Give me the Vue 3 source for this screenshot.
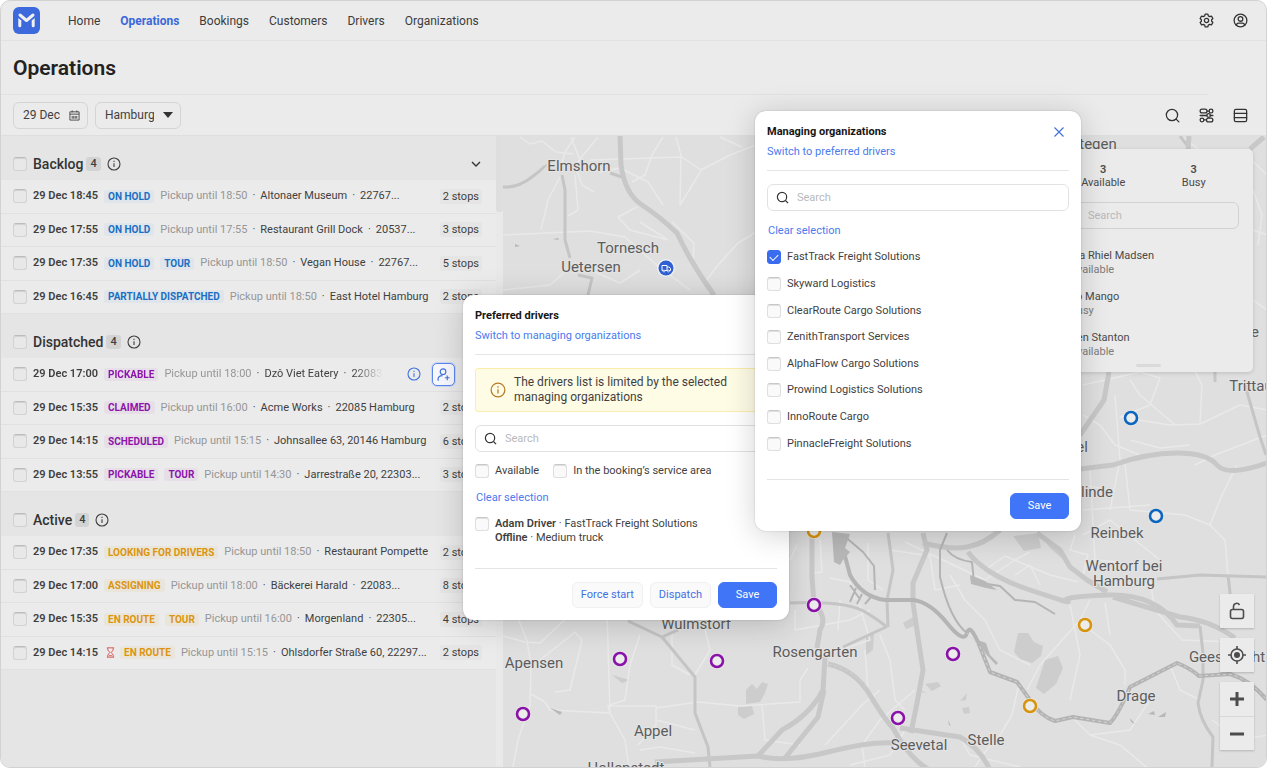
<script setup>
import { ref } from 'vue'

const nav = ['Home', 'Operations', 'Bookings', 'Customers', 'Drivers', 'Organizations']
const city = ref('Hamburg')
const managed = ref(['FastTrack Freight Solutions'])

const groups = [
  {
    name: 'Backlog', tone: 'hold', chevron: true,
    rows: [
      { time: '29 Dec 18:45', tags: ['ON HOLD'], until: '18:50', place: 'Altonaer Museum', zip: '22767...', stops: 2 },
      { time: '29 Dec 17:55', tags: ['ON HOLD'], until: '17:55', place: 'Restaurant Grill Dock', zip: '20537...', stops: 3 },
      { time: '29 Dec 17:35', tags: ['ON HOLD', 'TOUR'], until: '18:50', place: 'Vegan House', zip: '22767...', stops: 5 },
      { time: '29 Dec 16:45', tags: ['PARTIALLY DISPATCHED'], until: '18:50', place: 'East Hotel Hamburg', zip: ' ', stops: 2 },
    ],
  },
  {
    name: 'Dispatched', tone: 'sent',
    rows: [
      { time: '29 Dec 17:00', tags: ['PICKABLE'], until: '18:00', place: 'Dzô Viet Eatery', zip: '22083', actions: true },
      { time: '29 Dec 15:35', tags: ['CLAIMED'], until: '16:00', place: 'Acme Works', zip: '22085 Hamburg', stops: 2 },
      { time: '29 Dec 14:15', tags: ['SCHEDULED'], until: '15:15', place: 'Johnsallee 63, 20146 Hamburg', stops: 6 },
      { time: '29 Dec 13:55', tags: ['PICKABLE', 'TOUR'], until: '14:30', place: 'Jarrestraße 20, 22303...', stops: 3 },
    ],
  },
  {
    name: 'Active', tone: 'live',
    rows: [
      { time: '29 Dec 17:35', tags: ['LOOKING FOR DRIVERS'], until: '18:50', place: 'Restaurant Pompette', stops: 2 },
      { time: '29 Dec 17:00', tags: ['ASSIGNING'], until: '18:00', place: 'Bäckerei Harald', zip: '22083...', stops: 8 },
      { time: '29 Dec 15:35', tags: ['EN ROUTE', 'TOUR'], until: '16:00', place: 'Morgenland', zip: '22305...', stops: 4 },
      { time: '29 Dec 14:15', late: true, tags: ['EN ROUTE'], until: '15:15', place: 'Ohlsdorfer Straße 60, 22297...', stops: 2 },
    ],
  },
]

const organizations = [
  'FastTrack Freight Solutions', 'Skyward Logistics', 'ClearRoute Cargo Solutions', 'ZenithTransport Services',
  'AlphaFlow Cargo Solutions', 'Prowind Logistics Solutions', 'InnoRoute Cargo', 'PinnacleFreight Solutions',
]

const drivers = [
  { name: 'Ida Rhiel Madsen', state: 'Available' },
  { name: 'Jo Mango', state: 'Busy' },
  { name: 'Ben Stanton', state: 'Available' },
]

const places = [
  ['Elmshorn', 579, 171], ['Tornesch', 628, 253], ['Uetersen', 591, 272], ['Apensen', 534, 668],
  ['Appel', 653, 736], ['Wulmstorf', 696, 629], ['Rosengarten', 815, 657], ['Seevetal', 919, 750],
  ['Stelle', 986, 745], ['Drage', 1136, 701], ['Reinbek', 1117, 538], ['Wentorf bei', 1124, 571],
  ['Hamburg', 1124, 586], ['Geesthacht', 1227, 662], ['Trittau', 1251, 391], ['Hollenstedt', 626, 773],
  ['linde', 1097, 497], ['el', 1082, 452], ['tegen', 1098, 149], ['e', 1255, 337],
]

const pins = [
  ['#8a12a8', 620, 659], ['#8a12a8', 717, 661], ['#8a12a8', 523, 714], ['#8a12a8', 814, 605],
  ['#8a12a8', 953, 654], ['#8a12a8', 898, 718], ['#d8930f', 814, 531], ['#d8930f', 1085, 625],
  ['#d8930f', 1030, 706], ['#0d66bd', 1131, 418], ['#0d66bd', 1156, 516],
]

const lanes = [
  'M520 137L530 144L542 141L556 152L573 154M575 137L565 152L560 170M598 137L575 165L582 185L594 192M571 137L580 160L600 172L620 168L648 182L663 205M590 160L650 158L682 157L701 170L730 155L766 141',
  'M663 137L652 155L645 175L632 182M676 137L681 155L680 205L701 171M720 137L742 147M560 177L548 200L541 230M575 175L578 210L568 216M503 235L590 231L625 237L660 268L690 290M618 217L637 207M618 217L630 230L668 240M668 240L640 222M766 226L738 243L718 265L705 282M672 222L694 243L693 262M503 290L550 285L575 263L620 283L640 270',
  'M503 636L525 642L540 643L575 610M513 606L527 641L531 665L530 705L518 740L513 767M540 660L575 632L582 640L570 690L555 692M531 694L545 702L550 710L610 713L608 706L656 706L656 720L695 730M610 713L607 612M610 713L625 740L629 767M656 706L656 725L638 745M607 706L625 700L630 665L640 635M700 610L710 650L695 675M770 704L740 706L698 702L656 708M770 704L800 702L800 680L808 668',
  'M640 750L660 747L695 753M762 705L765 740L800 745M672 632L672 665L690 675M790 560L797 545M795 610L795 630L850 620L870 610M880 635L890 660L895 700L905 710M865 650L868 690L875 697M830 578L850 582L855 600M868 543L868 580L883 590M890 550L930 556L935 590L960 585M950 575L965 600L985 620L1000 650L1030 665',
  'M1083 385L1140 372L1160 378L1150 405L1120 417L1170 425L1200 424L1240 405L1267 410M1115 395L1120 460L1110 510M1200 424L1202 385L1195 371M1175 425L1140 395L1130 380M1267 435L1215 455L1195 465M1083 415L1100 425L1115 445L1140 455M1090 470L1095 560L1120 562M1125 464L1130 510L1185 515L1210 525L1225 540L1228 575M1210 525L1222 495L1237 465M1083 510L1150 505M1083 535L1110 520L1160 560',
  'M1027 690L1040 665L1080 620L1090 600M1090 630L1110 645L1125 670L1125 685M1105 603L1110 635M1070 605L1080 655L1070 700M1150 580L1155 610L1182 640L1235 642M1150 700L1130 730L1090 735L1070 715M1090 735L1120 745L1150 770M1170 665L1180 690L1200 700M1212 720L1240 740L1267 735M960 737L970 755L1020 767M1018 688L1012 715L1000 735L985 752L975 767M905 730L890 755L850 765M915 690L880 720L862 745L865 767',
  'M905 542L985 580L1015 560L1030 552M985 570L1005 556L1050 575L1078 582M1015 575L1030 565L1040 585M1075 535L1070 550L1088 555L1083 575M1083 485L1110 490M1130 440L1160 448L1190 445M820 540L822 572L812 573M840 600L838 630M855 590L870 640L840 650M880 690L862 705L825 745',
  'M1180 136L1200 150L1195 149M1240 149L1267 175M1253 230L1267 235M1253 300L1267 310M1253 190L1262 215L1258 245',
]
</script>

<template>
  <div class="app">
    <header class="topbar">
      <svg class="logo" viewBox="0 0 27 27" aria-label="Logo">
        <rect width="27" height="27" rx="6" fill="#3c69dc" />
        <path d="M7 8L13.500 13.500L20 8" fill="none" stroke="#f0f0f2" stroke-width="3" stroke-linecap="round" stroke-linejoin="round" />
        <path d="M5.300 11L8.300 13.400V18.700a1.500 1.500 0 0 1-3 0zM21.700 11L18.700 13.400V18.700a1.500 1.500 0 0 0 3 0z" fill="#f0f0f2" />
      </svg>
      <nav class="nav">
        <a v-for="item in nav" :key="item" href="#" :class="{ current: item === 'Operations' }">{{ item }}</a>
      </nav>
      <div class="tools">
        <button class="tool" aria-label="Settings">
          <svg viewBox="0 0 16 16"><path d="M6.700 2h2.600l.4 1.700 1.300.7 1.700-.5 1.300 2.200-1.200 1.200v1.400l1.200 1.200-1.300 2.200-1.700-.5-1.300.7-.4 1.700H6.700l-.4-1.700-1.300-.7-1.700.5L2 9.900l1.200-1.200V7.300L2 6.100l1.300-2.200 1.700.5 1.300-.7z" /><circle cx="8" cy="8" r="2" /></svg>
        </button>
        <button class="tool" aria-label="Account">
          <svg viewBox="0 0 16 16"><circle cx="8" cy="8" r="6" /><circle cx="8" cy="6.500" r="2.200" /><path d="M4 12.300c.4-1.300 1.200-1.900 2.200-1.900h3.600c1 0 1.800.6 2.200 1.900" /></svg>
        </button>
      </div>
    </header>

    <div class="heading"><h1>Operations</h1></div>

    <div class="filters">
      <button class="field">
        29 Dec
        <svg class="cal" viewBox="0 0 12 12"><path d="M1 2h10v9H1zM1 4.500h10M3.500.5v2M8.500.5v2M3.500 6.500v3M5.200 6.500v3M6.800 6.500v3M8.500 6.500v3" /></svg>
      </button>
      <label class="pick">
        <select v-model="city" aria-label="City"><option>Hamburg</option></select>
        <svg viewBox="0 0 10 6"><path d="M0 0h10L5 6z" fill="#333" /></svg>
      </label>
      <div class="tools">
        <button class="tool" aria-label="Search">
          <svg viewBox="0 0 16 16"><circle cx="7.500" cy="7.500" r="5.300" /><path d="M11.400 11.400L14 14" /></svg>
        </button>
        <button class="tool" aria-label="Filters">
          <svg viewBox="0 0 16 16"><rect x="2" y="2" width="6.500" height="3.600" rx="1.800" /><rect x="10.500" y="2" width="3.500" height="3.600" rx="1.700" /><path d="M8.500 3.800h2M2 8h2.500M11.500 8H14M5.500 12.200h2.500" /><circle cx="10" cy="8" r="1.700" /><path d="M4.500 8h3.800" /><rect x="2" y="10.400" width="3.500" height="3.600" rx="1.700" /><rect x="8" y="10.400" width="6" height="3.600" rx="1.800" /></svg>
        </button>
        <button class="tool" aria-label="List view">
          <svg viewBox="0 0 16 16"><rect x="2.200" y="2.200" width="11.600" height="11.600" rx="1.500" /><path d="M2.200 6h11.600M2.200 10h11.600" /></svg>
        </button>
      </div>
    </div>

    <main class="content">
      <section class="bookings">
        <section v-for="g in groups" :key="g.name" :class="g.tone">
          <header class="group-head">
            <input type="checkbox" :aria-label="'Select all ' + g.name">
            <h2>{{ g.name }}</h2>
            <span class="count">4</span>
            <svg class="info" viewBox="0 0 14 14"><circle cx="7" cy="7" r="6" /><path d="M7 6.300v3.700M7 3.800v1.200" /></svg>
            <svg v-if="g.chevron" class="chevron" viewBox="0 0 10 6"><path d="M1 1l4 4 4-4" /></svg>
          </header>
          <ul class="rows">
            <li v-for="r in g.rows" :key="r.time">
              <input type="checkbox" :aria-label="'Select booking ' + r.time">
              <div class="line" :class="{ fade: r.actions }">
                <b>{{ r.time }}</b>
                <svg v-if="r.late" class="late" viewBox="0 0 10 12"><path d="M1 .8h8M1 11.200h8M2 1v2.200L4.200 6 2 8.800V11M8 1v2.200L5.800 6 8 8.800V11M3.500 9.500h3" /></svg>
                <span v-for="t in r.tags" :key="t" class="tag">{{ t }}</span>
                <span class="until">Pickup until {{ r.until }}</span>
                <span class="place"><i>·</i>{{ r.place }}<template v-if="r.zip"><i>·</i>{{ r.zip }}</template></span>
              </div>
              <template v-if="r.actions">
                <button class="plain" aria-label="Details"><svg class="info" viewBox="0 0 14 14"><circle cx="7" cy="7" r="6" /><path d="M7 6.300v3.700M7 3.800v1.200" /></svg></button>
                <button class="assign" aria-label="Assign driver"><svg viewBox="0 0 16 16"><circle cx="7.500" cy="5" r="3" /><path d="M2 14c0-3.500 2-4.800 5-4.800M12 9v5M9.500 11.500h5M2 14h1" /></svg></button>
              </template>
              <span v-else class="stops">{{ r.stops }} stops</span>
            </li>
          </ul>
        </section>
      </section>
      <div class="gutter"><div class="thumb"></div></div>

      <section class="map">
        <svg class="canvas" viewBox="503 136 763 631" preserveAspectRatio="xMinYMin slice">
          <g fill="#cdcdcd">
            <path d="M746 690L752 684L757 689L762 682L768 684L765 693L760 702L746 704zM738 707L752 706L754 714L744 719L738 715z" />
            <path d="M1018 633L1028 633L1034 642L1043 646L1041 656L1032 663L1020 659L1014 652zM1045 660L1058 656L1063 668L1056 684L1044 694L1036 688z" />
            <path d="M925 684L938 682L941 686L932 691zM960 701L967 693L966 700zM962 708L969 707L970 713L964 714zM1013 536L1038 533L1041 548L1024 551z" />
            <path d="M866 636L874 634L873 650L866 655zM903 623L913 617L914 626L906 629zM1040 534L1060 550L1064 560L1050 548zM612 675L630 680L622 683z" />
          </g>
          <path v-for="(d, i) in lanes" :key="i" :d="d" fill="none" stroke="#e9e9e9" stroke-width="1.5" stroke-linejoin="round" />
          <g fill="none" stroke="#c5c5c5" stroke-width="3" stroke-linejoin="round">
            <path d="M503 187Q518 188 532 177T545 165M562 175L565 190L565 240L570 258M578 275L592 278L588 295M610 173L622 177" />
            <path d="M1245 385L1260 437L1266 455M1157 579L1200 575L1267 577M1228 575L1232 610M790 603Q847 600 867 613T886 627L843 647M628 621L662 637L695 677L695 713L708 747L710 767M662 637L678 630" />
            <path d="M1200 626L1203 653L1203 680L1198 703Q1200 720 1213 737L1212 767M1180 136L1190 149M888 533L893 570L887 600L888 627M1215 371L1215 382" />
          </g>
          <g fill="none" stroke="#c8c8c8" stroke-width="5" stroke-linejoin="round">
            <path d="M620 135L621 165Q625 194 642 205T677 233Q692 265 714 295" />
            <path d="M1109 372L1104 400L1080 435M1080 469L1113 465Q1147 453 1177 453T1217 465T1267 463" />
            <path d="M968 552Q985 575 1030 590T1067 601T1107 595T1177 625L1200 626M1113 597L1180 617Q1210 620 1235 638" />
            <path d="M1037 533L1060 550L1070 567L1087 580L1107 592M923 533L927 550L913 583L913 603L918 637L923 670L917 703L911 733M923 543Q950 550 967 547T1000 530" />
            <path d="M812 535L812 577L814 603Q828 618 820 630L817 648M825 657L823 690Q810 715 782 730L758 756M824 690L818 717L785 758M828 664Q855 670 870 695T893 728Q910 760 930 770" />
            <path d="M655 762L758 756Q785 763 828 752T896 743M900 728L960 737Q980 748 990 770M1189 136L1188 150M1250 149L1264 137" />
          </g>
          <g fill="none" stroke="#b4b4b4" stroke-linejoin="round">
            <path stroke-width="2" d="M947 533L940 550L940 577Q950 620 967 633M947 550Q955 560 972 562L974 582L1000 586L1015 600L1035 602L1055 614M850 585L859 598M856 588L850 602M862 594L857 604M871 597L865 604M843 535L863 552L874 566L875 590" />
            <path stroke-width="4" d="M842 545L850 575Q862 597 885 600L913 600Q930 602 947 623T967 633T980 647L990 672L1017 682L1030 700Q1040 716 1055 721L1073 717L1110 723Q1118 715 1130 687L1177 663Q1190 668 1199 676L1230 674Q1250 680 1267 700" />
            <path stroke="#d4d4d4" stroke-width="1" stroke-dasharray="3 3" d="M967 633T980 647L990 672L1017 682L1030 700Q1040 716 1055 721L1073 717L1110 723Q1118 715 1130 687L1177 663Q1190 668 1199 676L1230 674Q1250 680 1267 700M828 664Q855 670 868 690" />
          </g>
          <g fill="#b8b8b8">
            <path d="M832 532L850 534L845 548L850 552L843 560L840 565L834 562zM970 575L985 581L997 590L986 588L971 584zM978 640L986 643L990 655L998 663L996 665L985 653z" />
            <path d="M1148 714L1154 711L1155 715zM1158 717L1166 712L1165 717zM1130 718L1135 724L1131 722zM550 708L562 712L560 715zM515 244L520 246L515 247zM553 239L559 238L558 240zM921 691L927 693L922 692zM948 720L951 726L949 725z" />
          </g>
          <g class="labels" text-anchor="middle">
            <text v-for="p in places" :key="p[0]" :x="p[1]" :y="p[2]">{{ p[0] }}</text>
          </g>
          <g v-for="(p, i) in pins" :key="i">
            <circle :cx="p[1]" :cy="p[2]" r="8" fill="#e8e8e8" />
            <circle :cx="p[1]" :cy="p[2]" r="6" fill="#ececec" :stroke="p[0]" stroke-width="2.600" />
          </g>
          <circle cx="666" cy="268" r="9" fill="#eef0f5" />
          <circle cx="666" cy="268" r="7.500" fill="#2f5fd0" />
          <path d="M662 265.500h5v5h-5zM667 267h2.200l1.300 1.600v1.900H667" fill="none" stroke="#fff" />
          <circle cx="664" cy="271" r="1" fill="#2f5fd0" stroke="#fff" stroke-width=".7" />
          <circle cx="668.500" cy="271" r="1" fill="#2f5fd0" stroke="#fff" stroke-width=".7" />
        </svg>

        <aside class="drivers">
          <dl class="stats">
            <div><dd>3</dd><dt>Available</dt></div>
            <div><dd>3</dd><dt>Busy</dt></div>
          </dl>
          <label class="search">
            <svg viewBox="0 0 14 14"><circle cx="6.500" cy="6.500" r="5" /><path d="M10.200 10.200L13 13" /></svg>
            <input type="text" placeholder="Search" aria-label="Search drivers">
          </label>
          <ul>
            <li v-for="d in drivers" :key="d.name">{{ d.name }}<small>{{ d.state }}</small></li>
          </ul>
          <div class="grip"></div>
        </aside>

        <div class="controls">
          <button aria-label="Unlock map"><svg viewBox="0 0 20 20"><rect x="3.500" y="8.500" width="13" height="9" rx="2" /><path d="M6.500 8.500V5.500a3.200 3.200 0 0 1 6-1.500" /></svg></button>
          <button aria-label="Centre map"><svg viewBox="0 0 20 20"><circle cx="10" cy="10" r="6" /><circle cx="10" cy="10" r="3" fill="#4c4c4c" stroke="none" /><path d="M10 1v3M10 16v3M1 10h3M16 10h3" /></svg></button>
          <div class="zoom">
            <button aria-label="Zoom in"><svg viewBox="0 0 20 20"><path class="thick" d="M10 3v14M3 10h14" /></svg></button>
            <button aria-label="Zoom out"><svg viewBox="0 0 20 20"><path class="thick" d="M3 10h14" /></svg></button>
          </div>
        </div>
      </section>
    </main>

    <section class="dialog preferred" role="dialog" aria-label="Preferred drivers">
      <header>
        <div>
          <h3>Preferred drivers</h3>
          <a href="#">Switch to managing organizations</a>
        </div>
      </header>
      <p class="notice">
        <svg class="info" viewBox="0 0 14 14"><circle cx="7" cy="7" r="6" /><path d="M7 6.300v3.700M7 3.800v1.200" /></svg>
        <span>The drivers list is limited by the selected<br>managing organizations</span>
      </p>
      <label class="search">
        <svg viewBox="0 0 14 14"><circle cx="6.500" cy="6.500" r="5" /><path d="M10.200 10.200L13 13" /></svg>
        <input type="text" placeholder="Search" aria-label="Search preferred drivers">
      </label>
      <div class="toggles">
        <label class="check"><input type="checkbox">Available</label>
        <label class="check"><input type="checkbox">In the booking’s service area</label>
      </div>
      <a class="clear" href="#">Clear selection</a>
      <label class="check driver">
        <input type="checkbox">
        <span><b>Adam Driver</b> · FastTrack Freight Solutions<br><b>Offline</b> · Medium truck</span>
      </label>
      <footer>
        <button class="ghost">Force start</button>
        <button class="ghost">Dispatch</button>
        <button class="save">Save</button>
      </footer>
    </section>

    <section class="dialog managing" role="dialog" aria-label="Managing organizations">
      <header>
        <div>
          <h3>Managing organizations</h3>
          <a href="#">Switch to preferred drivers</a>
        </div>
        <button class="close" aria-label="Close"><svg viewBox="0 0 10 10"><path d="M.5.5l9 9M9.500.5l-9 9" /></svg></button>
      </header>
      <label class="search">
        <svg viewBox="0 0 14 14"><circle cx="6.500" cy="6.500" r="5" /><path d="M10.200 10.200L13 13" /></svg>
        <input type="text" placeholder="Search" aria-label="Search organizations">
      </label>
      <a class="clear" href="#">Clear selection</a>
      <div class="options">
        <label v-for="o in organizations" :key="o" class="check">
          <input v-model="managed" type="checkbox" :value="o">{{ o }}
        </label>
      </div>
      <footer><button class="save">Save</button></footer>
    </section>
  </div>
</template>

<style>
body { background: #fff; }
</style>

<style scoped>
* { box-sizing: border-box; }
.app {
  position: relative;
  display: flex;
  flex-direction: column;
  height: 100vh;
  min-height: 640px;
  overflow: hidden;
  border: 1px solid #d2d2d2;
  border-radius: 10px;
  background: #ebebeb;
  color: #3f3f3f;
  font: 11px/14px Roboto, "Liberation Sans", sans-serif;
}
h1, h2, h3, p, ul, dl, dd { margin: 0; padding: 0; }
ul { list-style: none; }
svg { display: block; flex: none; }
button, input, select { font: inherit; color: inherit; }
button { padding: 0; border: 0; background: none; cursor: pointer; }
a { color: #4a7bee; text-decoration: none; }
b { font-weight: 600; }

.topbar { display: flex; align-items: center; height: 40px; padding: 0 17px 0 12px; border-bottom: 1px solid #e2e2e2; }
.logo { width: 27px; height: 27px; }
.nav { display: flex; gap: 20px; margin-left: 28px; font-size: 12px; }
.nav a { color: #3c3c3c; }
.nav .current { color: #3b68d9; font-weight: 700; }
.tools { display: flex; gap: 16px; margin-left: auto; }
.tool { display: grid; place-items: center; width: 18px; height: 18px; }
.tool svg { width: 17px; height: 17px; fill: none; stroke: #333; stroke-width: 1.2; stroke-linecap: round; stroke-linejoin: round; }

.heading { display: flex; align-items: center; height: 54px; margin-right: 58px; padding-left: 12px; border-bottom: 1px solid #e2e2e2; }
h1 { color: #222; font-size: 21px; line-height: 26px; font-weight: 600; }

.filters { display: flex; align-items: center; gap: 7px; height: 41px; padding: 0 17px 0 12px; border-bottom: 1px solid #dedede; font-size: 12px; }
.field, .pick select { height: 27px; border: 1px solid #d4d4d4; border-radius: 6px; background: transparent; }
.field { display: flex; align-items: center; gap: 9px; padding: 0 7px 0 9px; }
.cal { width: 11px; height: 11px; fill: none; stroke: #444; }
.pick { display: grid; align-items: center; }
.pick select { grid-area: 1 / 1; width: 86px; padding: 0 26px 0 9px; appearance: none; }
.pick svg { grid-area: 1 / 1; justify-self: end; width: 10px; height: 6px; margin-right: 8px; pointer-events: none; }

.content { display: flex; flex: 1; min-height: 0; }
.bookings { flex: none; width: 495px; overflow: hidden; background: #e5e5e5; }
.group-head { display: flex; align-items: center; gap: 6px; height: 44px; padding: 11px 15px 0 12px; }
h2 { font-size: 14px; line-height: 18px; font-weight: 500; color: #333; }
.count { margin-left: -3px; padding: 0 4px; border-radius: 3px; background: #d3d3d3; font-weight: 500; }
.info { width: 14px; height: 14px; fill: none; stroke: currentColor; stroke-width: 1.1; }
.chevron { width: 10px; height: 6px; margin-left: auto; fill: none; stroke: #333; stroke-width: 1.4; }
.rows { display: grid; grid-auto-rows: 1fr; min-height: 134px; }
.rows li { display: flex; align-items: center; gap: 6px; min-width: 0; padding: 0 14px 0 12px; border-bottom: 1px solid #e1e1e1; background: #ebebeb; }
.line { display: flex; flex: 1; align-items: center; min-width: 0; overflow: hidden; white-space: nowrap; }
.line b { flex: none; width: 71px; }
.tag { margin-right: 6px; padding: 0 4px; border-radius: 3px; font-size: 10px; line-height: 13px; font-weight: 700; }
.hold .tag { background: #dfe5ea; color: #1a6fc4; }
.sent .tag { background: #e6dfe8; color: #8c14ab; }
.live .tag { background: #eae5da; color: #db950f; }
.late { width: 9px; height: 11px; margin: 0 5px 0 2px; fill: none; stroke: #dc4a4a; }
.until { color: #969696; }
.place i { margin: 0 5px; font-style: normal; }
.fade { flex: none; width: 350px; mask-image: linear-gradient(90deg, #000 320px, transparent 350px); }
.stops { flex: none; min-width: 42px; padding: 0 3px; border-radius: 3px; background: #e5e5e5; line-height: 15px; text-align: center; }
.plain { margin-left: 18px; color: #4373dc; }
.assign { display: grid; place-items: center; width: 23px; height: 23px; margin-left: 5px; border: 1px solid #5b86ee; border-radius: 5px; background: #f6f8fd; box-shadow: 0 0 0 1px #c9d6f5; }
.assign svg { width: 15px; height: 15px; fill: none; stroke: #4373dc; stroke-width: 1.2; }
.gutter { flex: none; width: 7px; background: #e9e9e9; }
.thumb { height: 76px; background: #dedede; border-radius: 0 0 3px 3px; }

input[type="checkbox"] {
  flex: none;
  width: 14px;
  height: 14px;
  margin: 0;
  border: 1px solid #d2d2d2;
  border-top-color: #bcbcbc;
  border-radius: 3px;
  background: #e8e8e8;
  box-shadow: inset 0 1px #d2d2d2;
  appearance: none;
}

.map { position: relative; flex: 1; min-width: 0; overflow: hidden; background: #dfdfdf; }
.canvas { width: 100%; height: 100%; }
.labels { fill: #5c5c5c; font-size: 15px; stroke: #e4e4e4; stroke-width: 2px; paint-order: stroke; }

.drivers { position: absolute; top: 13px; right: 13px; width: 209px; padding: 14px 14px 5px; border-radius: 5px; background: #ebebeb; color: #4a4a4a; box-shadow: 0 1px 4px rgb(0 0 0 / 15%); }
.stats { display: grid; grid-template-columns: 1fr 1fr; text-align: center; }
.stats dd { font-weight: 600; line-height: 13px; }
.stats dt { line-height: 13px; }
.drivers .search { margin-top: 13px; border-color: #d2d2d2; background: transparent; }
.drivers ul { display: grid; gap: 14px; margin-top: 20px; padding-left: 12px; line-height: 14px; }
.drivers small { display: block; color: #7d7d7d; font-size: 11px; line-height: 13px; }
.grip { width: 25px; height: 3px; margin: 6px auto 0; border-radius: 2px; background: #dadada; }

.controls { position: absolute; right: 12px; bottom: 17px; display: grid; gap: 10px; }
.controls button { display: grid; place-items: center; width: 34px; height: 34px; background: #ebebeb; }
.controls > button, .zoom { box-shadow: 0 1px 2px rgb(0 0 0 / 20%); background: #ebebeb; }
.zoom button + button { border-top: 1px solid #d8d8d8; }
.controls svg { width: 20px; height: 20px; fill: none; stroke: #4c4c4c; stroke-width: 1.6; }
.controls .thick { stroke-width: 3; }

.dialog {
  position: absolute;
  width: 326px;
  padding: 13px 12px 12px;
  border-radius: 11px;
  background: #fff;
  box-shadow: 0 4px 30px rgb(0 0 0 / 18%), 0 0 2px rgb(0 0 0 / 20%);
}
.preferred { left: 462px; top: 294px; }
.managing { left: 754px; top: 110px; }
.dialog header { display: flex; justify-content: space-between; padding-bottom: 11px; border-bottom: 1px solid #e4e4e6; }
h3 { margin-bottom: 6px; color: #161616; font-size: 11px; line-height: 15px; font-weight: 700; }
.dialog header a { display: block; }
.close { display: grid; place-items: center; width: 20px; height: 16px; }
.close svg { width: 10px; height: 10px; fill: none; stroke: #4373dc; stroke-width: 1.2; }
.notice { display: flex; align-items: center; gap: 8px; margin-top: 13px; padding: 6px 14px; border: 1px solid #fbeeaa; border-radius: 3px; background: #fffce6; font-size: 12px; line-height: 15px; }
.notice .info { width: 16px; height: 16px; color: #b87a26; }
.search { display: flex; align-items: center; gap: 8px; height: 27px; margin-top: 13px; padding: 0 8px; border: 1px solid #e2e2e4; border-radius: 6px; background: #fff; }
.search svg { width: 13px; height: 13px; fill: none; stroke: #333; stroke-width: 1.3; }
.search input { flex: 1; min-width: 0; padding: 0; border: 0; outline: 0; background: none; }
.search input::placeholder { color: #b9b9bb; opacity: 1; }
.toggles { display: flex; gap: 14px; margin-top: 12px; }
.check { display: flex; align-items: center; gap: 6px; }
.dialog input[type="checkbox"] { display: grid; place-items: center; border-color: #dfdfdf; border-top-color: #c8c8c8; background: #fafafa; box-shadow: inset 0 1px #e0e0e0; }
.dialog input[type="checkbox"]:checked { border-color: #3a6cf0; background: #3a6cf0; box-shadow: none; }
.dialog input[type="checkbox"]:checked::after { content: ""; width: 7px; height: 4px; margin-bottom: 2px; border: solid #fff; border-width: 0 0 1px 1px; transform: rotate(-45deg); }
.clear { display: block; width: max-content; margin: 13px 0 0 1px; }
.driver { align-items: flex-start; margin-top: 12px; line-height: 14px; }
.options { display: grid; grid-auto-rows: 1fr; min-height: 213px; margin-top: 6px; }
.dialog footer { display: flex; justify-content: flex-end; gap: 7px; margin-top: 23px; padding-top: 13px; border-top: 1px solid #e4e4e6; }
.managing footer { margin-top: 22px; }
.ghost, .save { height: 26px; padding: 0 8px; border: 1px solid #f0f0f2; border-radius: 6px; background: #fafafb; color: #3f70e4; }
.save { width: 59px; border-color: #3f75f6; background: #3f75f6; color: #fff; }
</style>
